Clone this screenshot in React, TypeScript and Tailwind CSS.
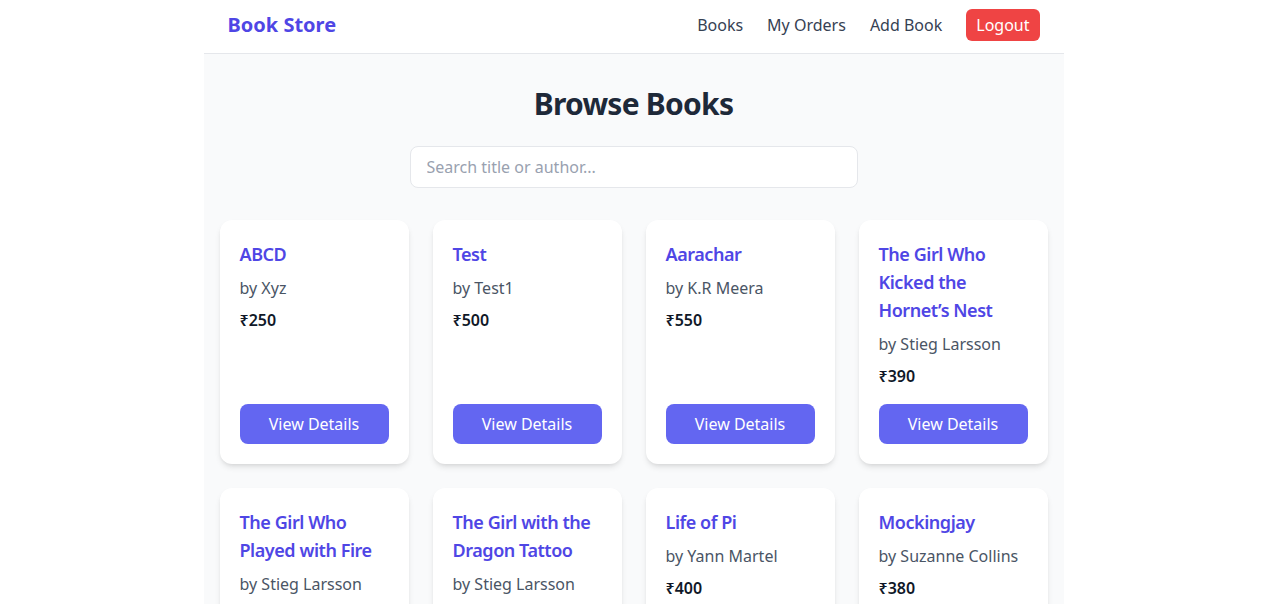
import React from 'react'

interface Book {
  title: string
  author: string
  price: number
}

const books: Book[] = [
  { title: 'ABCD', author: 'Xyz', price: 250 },
  { title: 'Test', author: 'Test1', price: 500 },
  { title: 'Aarachar', author: 'K.R Meera', price: 550 },
  { title: 'The Girl Who Kicked the Hornet\u2019s Nest', author: 'Stieg Larsson', price: 390 },
  { title: 'The Girl Who Played with Fire', author: 'Stieg Larsson', price: 420 },
  { title: 'The Girl with the Dragon Tattoo', author: 'Stieg Larsson', price: 450 },
  { title: 'Life of Pi', author: 'Yann Martel', price: 400 },
  { title: 'Mockingjay', author: 'Suzanne Collins', price: 380 },
]

function Navbar() {
  return (
    <nav className="h-[54px] pb-[3px] bg-white border-b border-gray-200 flex items-center justify-between px-6">
      <span className="text-xl font-bold text-[#4f46e5]">Book Store</span>
      <div className="flex items-center gap-6 text-gray-700">
        <a href="#">Books</a>
        <a href="#">My Orders</a>
        <a href="#">Add Book</a>
        <button className="h-8 px-[10px] rounded-md bg-[#ef4444] text-white">Logout</button>
      </div>
    </nav>
  )
}

function BookCard({ book }: { book: Book }) {
  return (
    <div className="bg-white rounded-xl shadow-md p-5 flex flex-col min-h-[244px]">
      <h3 className="text-lg leading-7 font-semibold tracking-tight text-[#4f46e5]">{book.title}</h3>
      <p className="mt-2 text-gray-600">by {book.author}</p>
      <p className="mt-2 font-semibold text-gray-900">₹{book.price}</p>
      <button className="mt-auto h-10 w-full rounded-lg bg-[#6366f1] text-white">View Details</button>
    </div>
  )
}

export default function App() {
  return (
    <div className="min-h-screen bg-white" style={{ fontFamily: '"Noto Sans", sans-serif' }}>
      <div className="max-w-[860px] mx-auto min-h-screen bg-gray-50">
        <Navbar />
        <main className="p-4 pt-8">
          <h1 className="text-3xl font-bold tracking-tight text-gray-800 text-center">Browse Books</h1>
          <div className="mt-6 mb-8 flex justify-center">
            <input
              type="text"
              placeholder="Search title or author..."
              className="w-[448px] h-[42px] px-4 rounded-lg border border-gray-200 bg-white placeholder:text-gray-400 outline-none"
            />
          </div>
          <div className="grid grid-cols-4 gap-6">
            {books.map((b) => (
              <BookCard key={b.title} book={b} />
            ))}
          </div>
        </main>
      </div>
    </div>
  )
}
